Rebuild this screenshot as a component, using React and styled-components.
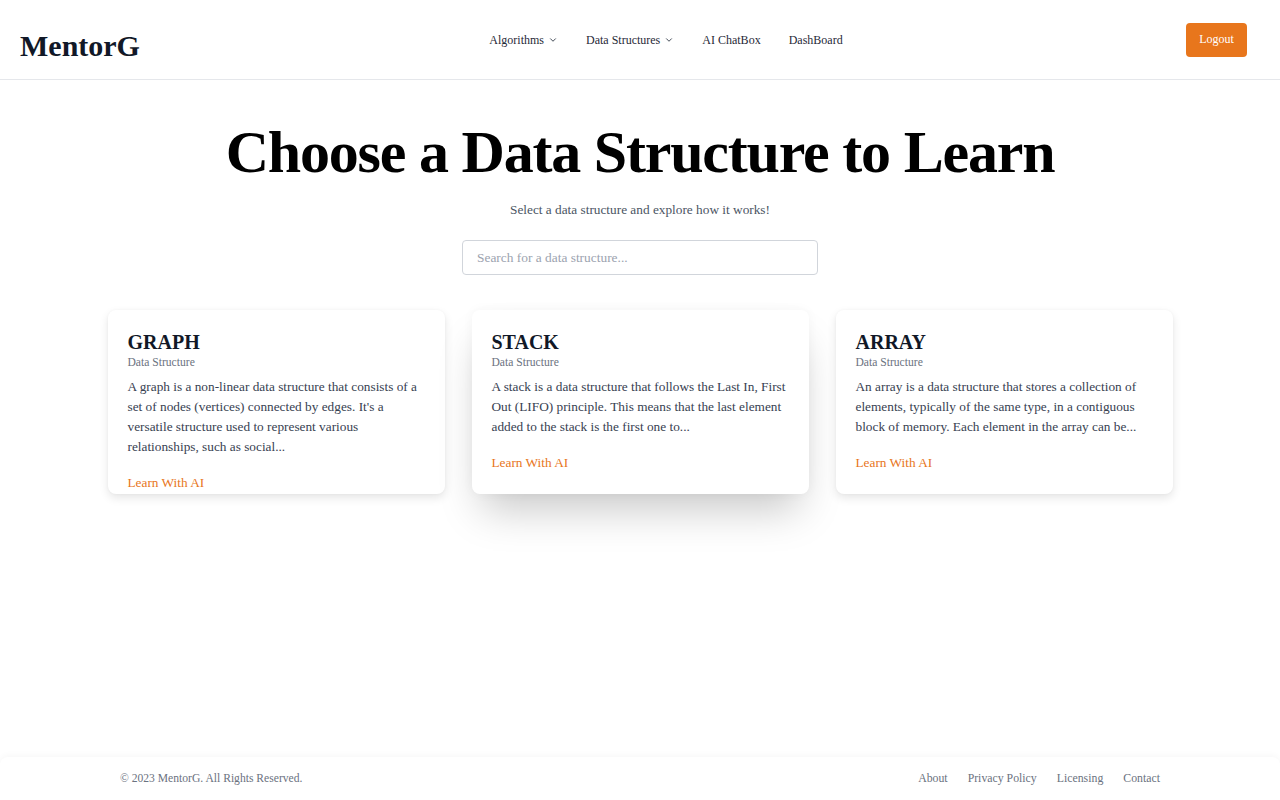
import styled, { createGlobalStyle } from 'styled-components';
import { ChevronDown } from 'lucide-react';

const GlobalStyle = createGlobalStyle`
	* {
		box-sizing: border-box;
	}
	body {
		margin: 0;
		font-family: 'Liberation Serif', 'Times New Roman', serif;
		background: #fff;
		color: #111827;
	}
`;

const cards = [
	{
		title: 'GRAPH',
		text: "A graph is a non-linear data structure that consists of a set of nodes (vertices) connected by edges. It's a versatile structure used to represent various relationships, such as social...",
	},
	{
		title: 'STACK',
		text: 'A stack is a data structure that follows the Last In, First Out (LIFO) principle. This means that the last element added to the stack is the first one to...',
		hovered: true,
	},
	{
		title: 'ARRAY',
		text: 'An array is a data structure that stores a collection of elements, typically of the same type, in a contiguous block of memory. Each element in the array can be...',
	},
];

export default function App() {
	return (
		<>
			<GlobalStyle />
			<Page>
				<Header>
					<Logo>MentorG</Logo>
					<Nav>
						<NavItem>
							Algorithms <ChevronDown size={10} strokeWidth={2} />
						</NavItem>
						<NavItem>
							Data Structures <ChevronDown size={10} strokeWidth={2} />
						</NavItem>
						<NavItem>AI ChatBox</NavItem>
						<NavItem>DashBoard</NavItem>
					</Nav>
					<LogoutButton>Logout</LogoutButton>
				</Header>

				<Main>
					<Title>Choose a Data Structure to Learn</Title>
					<Subtitle>Select a data structure and explore how it works!</Subtitle>
					<Search placeholder="Search for a data structure..." />

					<CardGrid>
						{cards.map((card) => (
							<Card key={card.title} $hovered={card.hovered}>
								<CardTitle>{card.title}</CardTitle>
								<CardType>Data Structure</CardType>
								<CardText>{card.text}</CardText>
								<LearnLink>Learn With AI</LearnLink>
							</Card>
						))}
					</CardGrid>
				</Main>

				<Footer>
					<Copyright>© 2023 MentorG. All Rights Reserved.</Copyright>
					<FooterLinks>
						<FooterLink>About</FooterLink>
						<FooterLink>Privacy Policy</FooterLink>
						<FooterLink>Licensing</FooterLink>
						<FooterLink>Contact</FooterLink>
					</FooterLinks>
				</Footer>
			</Page>
		</>
	);
}

const Page = styled.div`
	min-height: 100vh;
	display: flex;
	flex-direction: column;
`;

const Header = styled.header`
	height: 80px;
	display: flex;
	align-items: center;
	justify-content: space-between;
	padding: 0 33px 0 20px;
	border-bottom: 1px solid #e5e7eb;
`;

const Logo = styled.div`
	font-size: 30px;
	font-weight: 700;
	color: #111827;
	padding-top: 12px;
`;

const Nav = styled.nav`
	display: flex;
	align-items: center;
	gap: 28px;
	padding-left: 6px;
	padding-top: 1px;
`;

const NavItem = styled.span`
	display: flex;
	align-items: center;
	gap: 4px;
	font-size: 12px;
	color: #1f2937;
	cursor: pointer;
`;

const LogoutButton = styled.button`
	background: #e8761c;
	color: #fff;
	border: none;
	border-radius: 4px;
	width: 61px;
	height: 34px;
	font-family: inherit;
	font-size: 12px;
	cursor: pointer;
`;

const Main = styled.main`
	flex: 1;
	display: flex;
	flex-direction: column;
	align-items: center;
	padding-top: 36px;
`;

const Title = styled.h1`
	margin: 0;
	font-size: 60px;
	font-weight: 700;
	letter-spacing: -0.02em;
	color: #000;
	line-height: 1.2;
`;

const Subtitle = styled.p`
	margin: 14px 0 0;
	font-size: 13.3px;
	color: #4b5563;
`;

const Search = styled.input`
	margin-top: 22px;
	width: 356px;
	height: 35px;
	padding: 0 14px;
	border: 1px solid #d1d5db;
	border-radius: 4px;
	font-family: inherit;
	font-size: 13.4px;
	outline: none;

	&::placeholder {
		color: #9ca3af;
	}
`;

const CardGrid = styled.div`
	margin-top: 35px;
	display: grid;
	grid-template-columns: repeat(3, 337px);
	gap: 27px;
`;

const Card = styled.div`
	height: 184px;
	overflow: hidden;
	background: #fff;
	border-radius: 8px;
	padding: 20px 20px 0;
	display: flex;
	flex-direction: column;
	box-shadow: ${(p) =>
		p.$hovered
			? '0 25px 40px -10px rgba(0, 0, 0, 0.22), 0 0 12px rgba(0, 0, 0, 0.04)'
			: '0 4px 10px rgba(0, 0, 0, 0.1), 0 0 3px rgba(0, 0, 0, 0.04)'};
`;

const CardTitle = styled.h2`
	margin: 0;
	font-size: 20px;
	line-height: 24px;
	font-weight: 700;
	color: #111827;
`;

const CardType = styled.div`
	font-size: 11.6px;
	line-height: 18px;
	color: #6b7280;
`;

const CardText = styled.p`
	margin: 5px 0 0;
	font-size: 13.3px;
	line-height: 20px;
	color: #374151;
`;

const LearnLink = styled.a`
	margin-top: 16px;
	font-size: 13.3px;
	line-height: 20px;
	color: #e8761c;
	cursor: pointer;
`;

const Footer = styled.footer`
	height: 43px;
	display: flex;
	align-items: center;
	justify-content: space-between;
	padding: 0 120px;
	border-radius: 8px 8px 0 0;
	box-shadow: 0 -2px 6px rgba(0, 0, 0, 0.03);
`;

const Copyright = styled.span`
	font-size: 11.6px;
	color: #6b7280;
`;

const FooterLinks = styled.div`
	display: flex;
	gap: 20px;
`;

const FooterLink = styled.a`
	font-size: 11.8px;
	color: #6b7280;
	cursor: pointer;
`;
